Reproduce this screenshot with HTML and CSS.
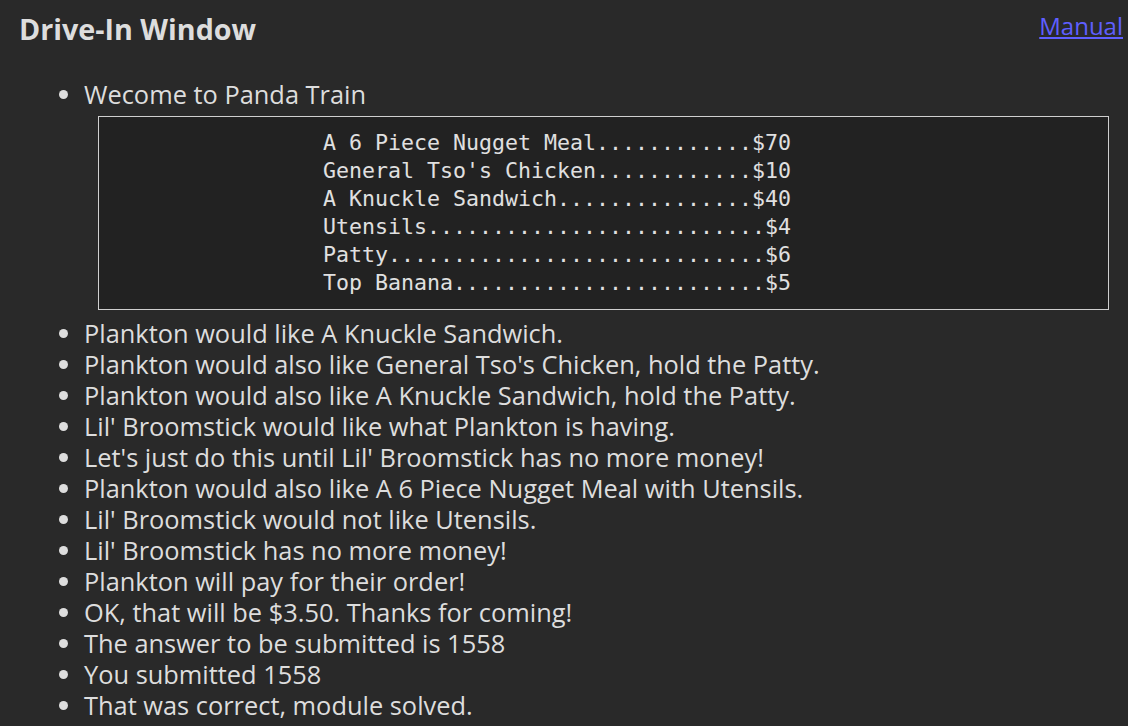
FILE: index.html
```html
<!DOCTYPE html>
<html>
<head>
<meta charset="utf-8">
<link rel="stylesheet" href="styles.css">
</head>
<body>
<div class="header">
  <h1 class="title">Drive-In Window</h1>
  <a class="manual" href="#">Manual</a>
</div>
<ul class="log">
  <li>Wecome to Panda Train</li>
  <li class="menu-item"><pre class="menu">A 6 Piece Nugget Meal............$70
General Tso's Chicken............$10
A Knuckle Sandwich...............$40
Utensils..........................$4
Patty.............................$6
Top Banana........................$5</pre></li>
  <li>Plankton would like A Knuckle Sandwich.</li>
  <li>Plankton would also like General Tso's Chicken, hold the Patty.</li>
  <li>Plankton would also like A Knuckle Sandwich, hold the Patty.</li>
  <li>Lil' Broomstick would like what Plankton is having.</li>
  <li>Let's just do this until Lil' Broomstick has no more money!</li>
  <li>Plankton would also like A 6 Piece Nugget Meal with Utensils.</li>
  <li>Lil' Broomstick would not like Utensils.</li>
  <li>Lil' Broomstick has no more money!</li>
  <li>Plankton will pay for their order!</li>
  <li>OK, that will be $3.50. Thanks for coming!</li>
  <li>The answer to be submitted is 1558</li>
  <li>You submitted 1558</li>
  <li>That was correct, module solved.</li>
</ul>
</body>
</html>
```
FILE: styles.css
```css
html, body {
  margin: 0;
  padding: 0;
  background: #292929;
  color: #dddddd;
  font-family: "Open Sans", "DejaVu Sans", sans-serif;
}
body {
  padding: 0 5px 0 19px;
}
.header {
  display: flex;
  justify-content: space-between;
  align-items: flex-start;
}
.title {
  margin: 10px 0 0 0;
  font-size: 28.7px;
  font-weight: bold;
  line-height: 38px;
}
.manual {
  margin-top: 10px;
  font-size: 24px;
  line-height: 32px;
  color: #5f5fff;
}
.log {
  margin: 31px 0 0 0;
  padding-left: 65px;
  font-size: 25.4px;
  line-height: 31px;
}
.menu-item {
  list-style: none;
  margin-left: -65px;
  padding-left: 79px;
}
.menu {
  margin: 6px 14px 8px 0;
  border: 1px solid #cfcfcf;
  background: #222222;
  color: #e0e0e0;
  font-family: "DejaVu Sans Mono", monospace;
  font-size: 21.6px;
  line-height: 28px;
  padding: 12px 0 12px 224px;
}
```
